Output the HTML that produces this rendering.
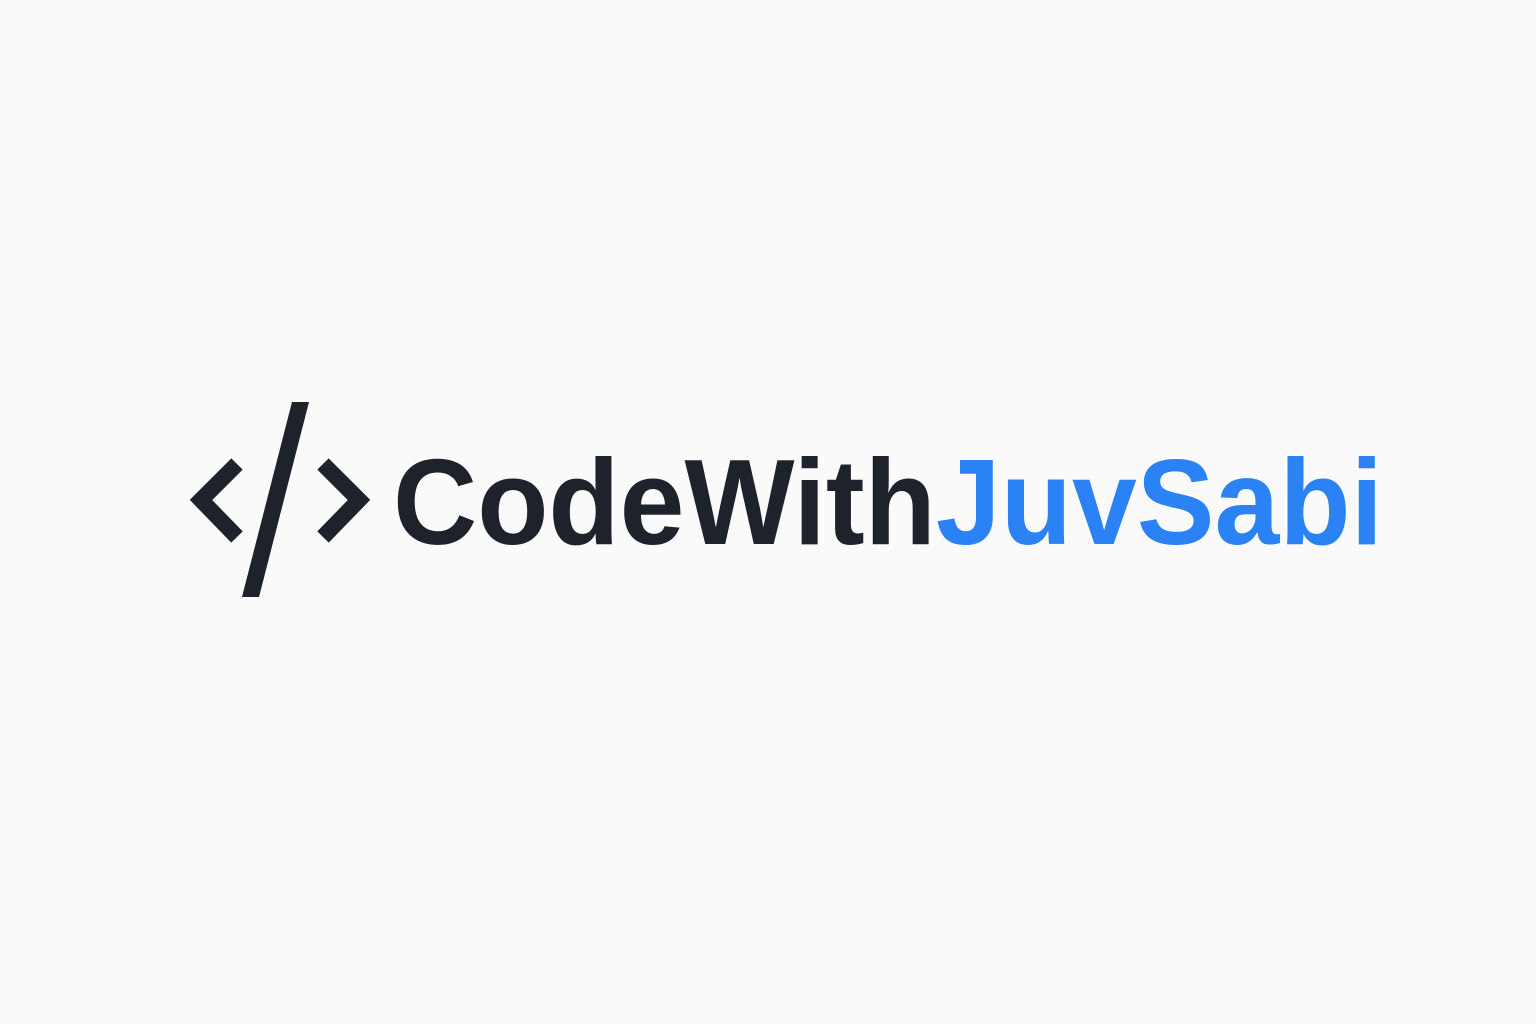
<!DOCTYPE html>
<html><head><meta charset="utf-8"><style>
html,body{margin:0;padding:0;background:#fafafa;}
svg{display:block}
</style></head><body>
<svg width="1536" height="1024" viewBox="0 0 1536 1024" xmlns="http://www.w3.org/2000/svg">
<rect width="1536" height="1024" fill="#fafafa"/>
<g fill="none" stroke="#1e232b" stroke-width="16" stroke-linejoin="miter" stroke-linecap="butt">
<polyline points="237,464 201,500 237,537"/>
<polyline points="323,464 359,500 323,537"/>
</g>
<polygon points="292,402 309,402 259,597 242,597" fill="#1e232b"/>
<text x="393" y="544" font-family="Liberation Sans, sans-serif" font-weight="bold" font-size="122" textLength="990" lengthAdjust="spacingAndGlyphs"><tspan fill="#1e232b">CodeWith</tspan><tspan fill="#2a82f4">JuvSabi</tspan></text>
</svg>
</body></html>
